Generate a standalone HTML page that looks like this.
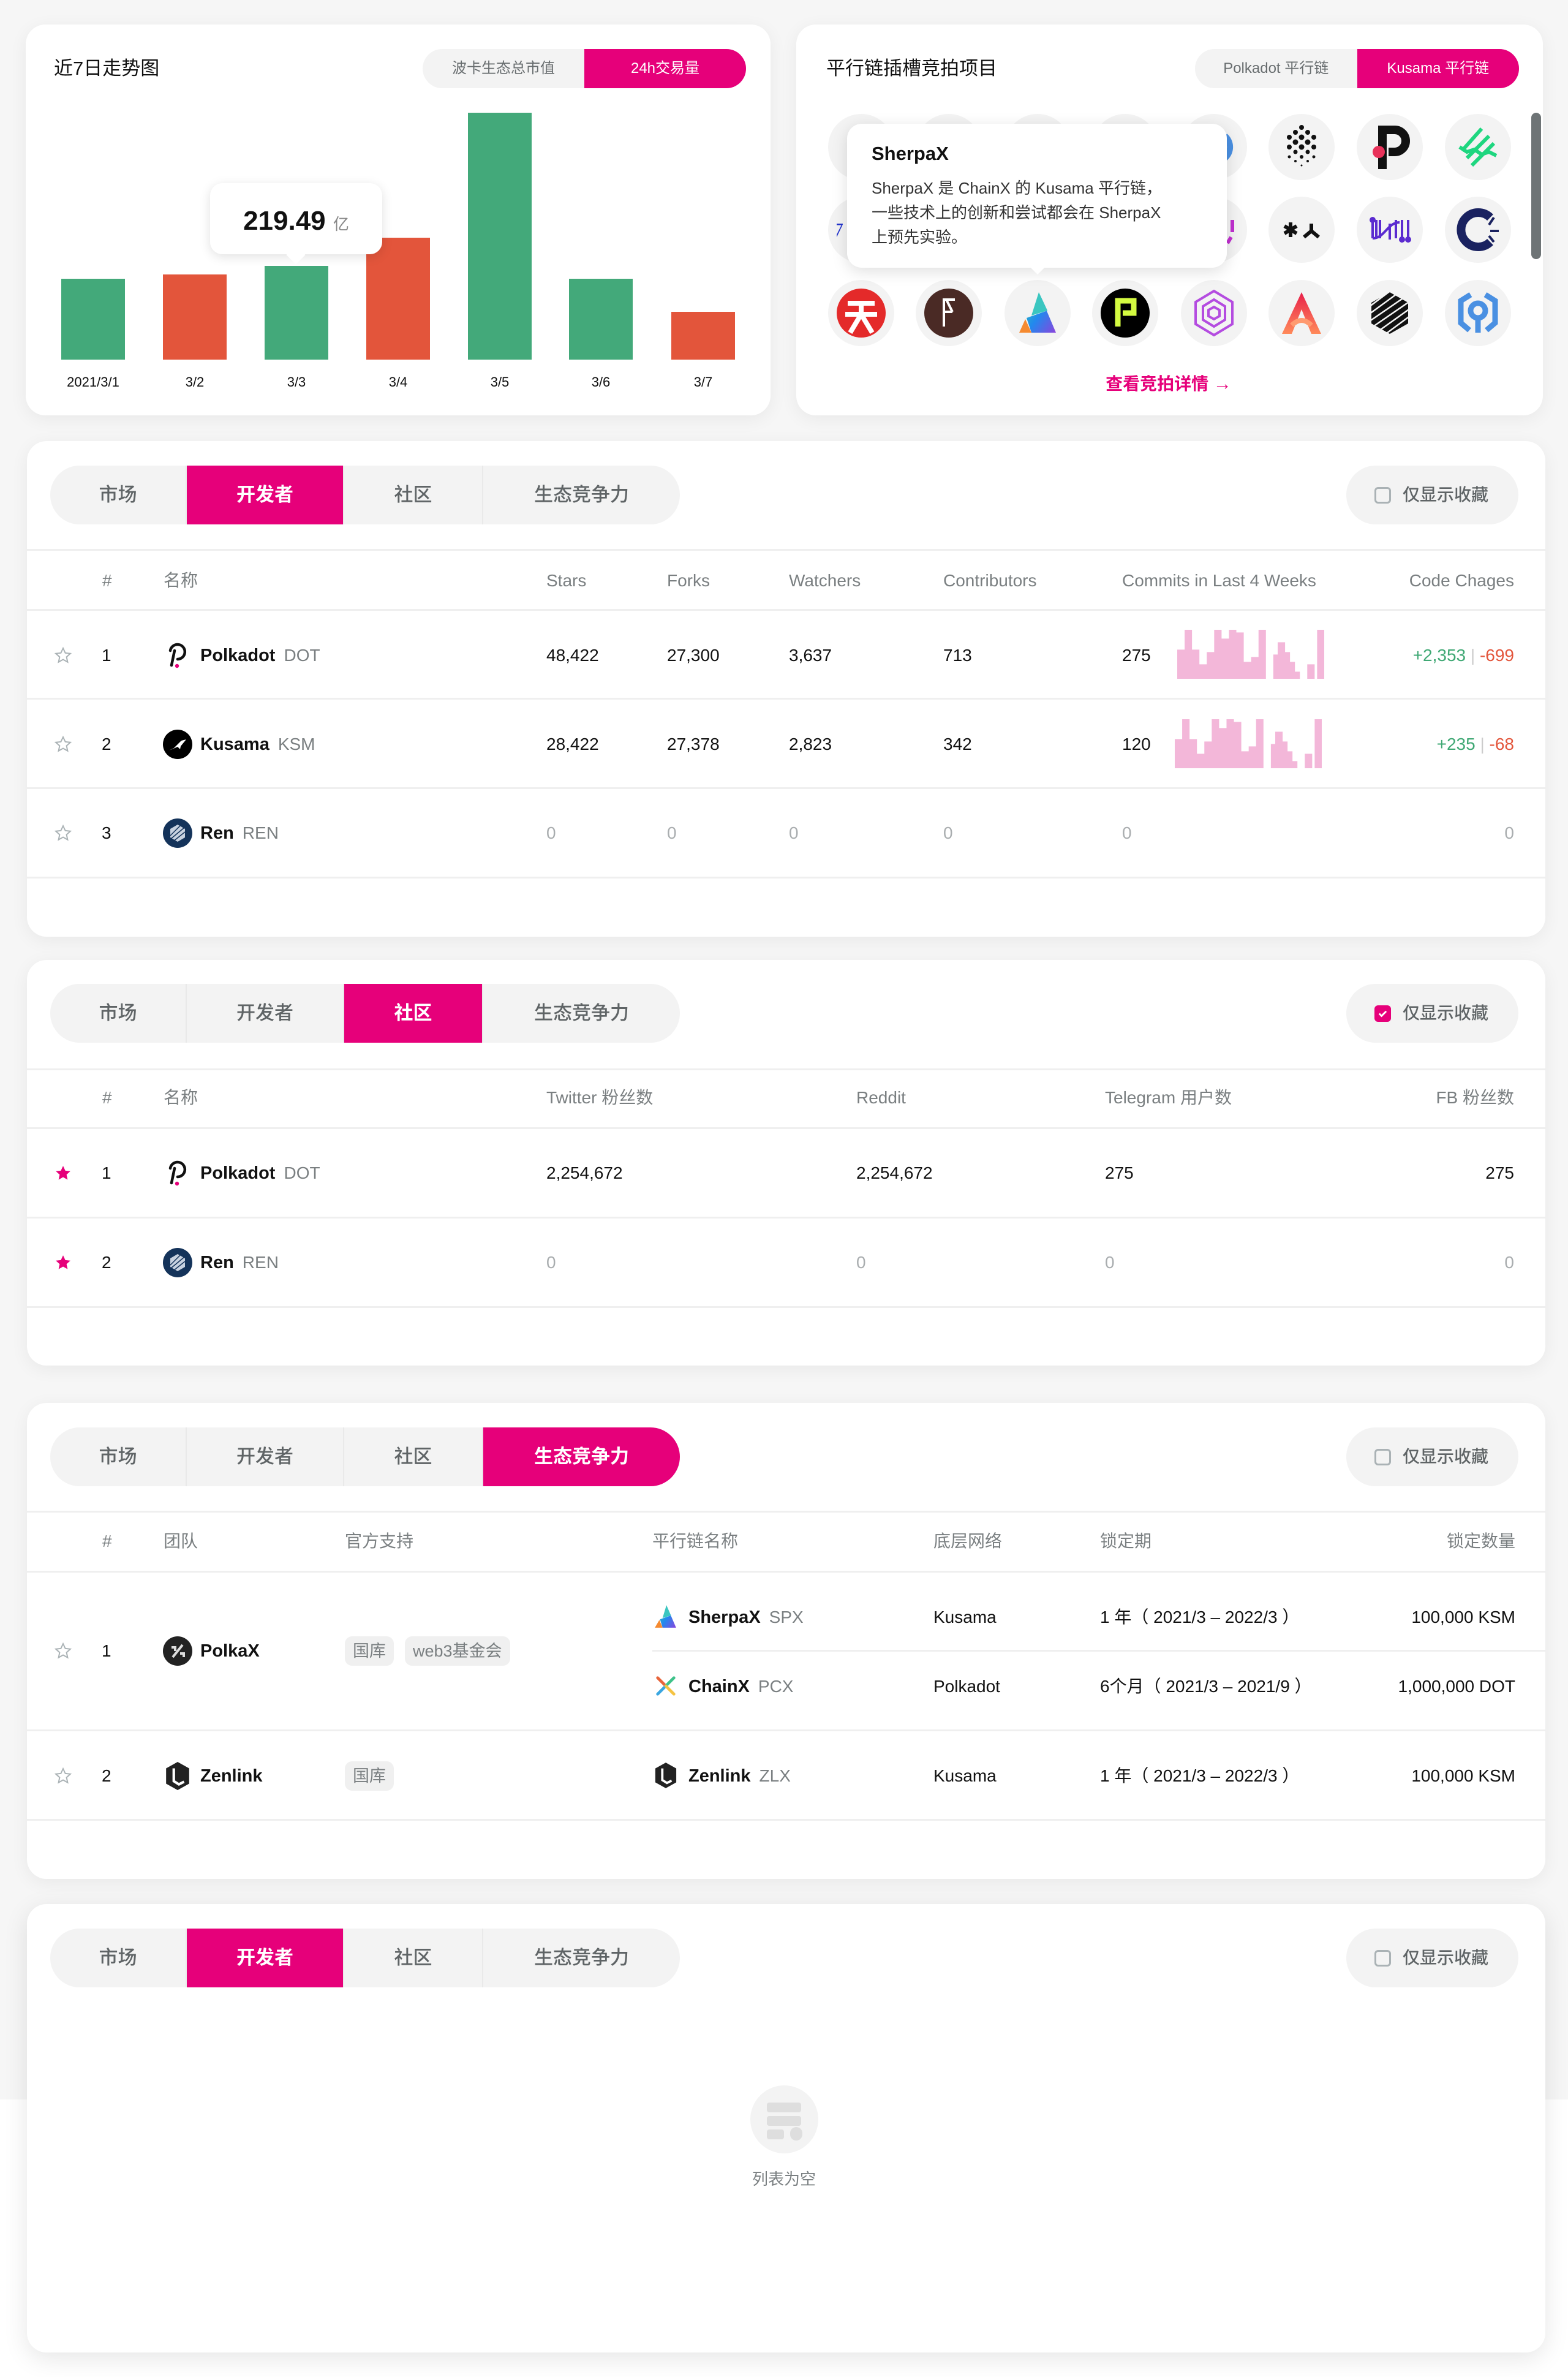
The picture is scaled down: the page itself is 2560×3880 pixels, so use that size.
<!DOCTYPE html>
<html><head><meta charset="utf-8">
<style>
*{margin:0;padding:0;box-sizing:border-box}
html,body{width:2560px;height:3880px;overflow:hidden}
body{position:relative;background:linear-gradient(#f6f6f6 0,#f6f6f6 3427px,#fff 3427px);font-family:"Liberation Sans","Noto Sans CJK SC",sans-serif;color:#111}
.a{position:absolute}
.card{position:absolute;background:#fff;border-radius:32px;box-shadow:0 6px 30px rgba(0,0,0,.06)}
.t{position:absolute;white-space:nowrap;height:40px;line-height:40px;font-size:28px}
.r{text-align:right}
.h{color:#7a7f81}
.g{color:#a9adaf}
.b{font-weight:bold;font-size:29px;color:#111}
.tk{color:#7a7f81;font-weight:normal;margin-left:14px;font-size:28px}
.line{position:absolute;height:3px;background:#efefef}
.tabs{position:absolute;left:82px;width:1028px;height:96px;border-radius:48px;background:#f3f3f3;overflow:hidden;display:flex}
.tabs div{height:96px;line-height:96px;text-align:center;font-size:31px;color:#5f6466;border-right:2px solid #e9e9e9;font-weight:500}
.tabs div:last-child{border-right:none}
.tabs .on{background:#e6007a;color:#fff;font-weight:bold}
.fav{position:absolute;left:2198px;width:281px;height:96px;border-radius:48px;background:#f3f3f3;font-size:28px;color:#5f6466;line-height:96px;padding-left:92px;font-weight:500}
.fav i{position:absolute;left:46px;top:35px;width:27px;height:27px;border:3px solid #aab2b5;border-radius:6px}
.fav i.ck{background:#e6007a;border-color:#e6007a}
.star{position:absolute;left:88px;width:30px;height:30px}
.ic{position:absolute;width:108px;height:108px;border-radius:54px;background:#f3f3f3}
.ic svg{position:absolute;left:14px;top:14px;width:80px;height:80px}
.tog{position:absolute;height:64px;border-radius:32px;background:#f3f3f3;overflow:hidden;display:flex;font-size:24px}
.tog div{flex:1;text-align:center;line-height:64px;color:#686d6f}
.tog .on{background:#e6007a;color:#fff}
.tag{position:absolute;height:48px;line-height:48px;border-radius:12px;background:#f0f0f0;color:#7a7f81;font-size:27px;padding:0 13px}
</style></head><body>

<!-- Card 1 -->
<div class="card" style="left:42px;top:40px;width:1216px;height:638px"></div>
<div class="t" style="left:88px;top:92px;font-size:31px">近7日走势图</div>
<div class="tog" style="left:690px;top:80px;width:528px"><div>波卡生态总市值</div><div class="on">24h交易量</div></div>
<div class="a" style="left:100px;top:455px;width:104px;height:132px;background:#43a97a"></div>
<div class="a" style="left:266px;top:448px;width:104px;height:139px;background:#e3553b"></div>
<div class="a" style="left:432px;top:434px;width:104px;height:153px;background:#43a97a"></div>
<div class="a" style="left:598px;top:388px;width:104px;height:199px;background:#e3553b"></div>
<div class="a" style="left:764px;top:184px;width:104px;height:403px;background:#43a97a"></div>
<div class="a" style="left:929px;top:455px;width:104px;height:132px;background:#43a97a"></div>
<div class="a" style="left:1096px;top:509px;width:104px;height:78px;background:#e3553b"></div>
<div class="t" style="left:100px;top:604px;width:104px;text-align:center;font-size:22px">2021/3/1</div>
<div class="t" style="left:266px;top:604px;width:104px;text-align:center;font-size:22px">3/2</div>
<div class="t" style="left:432px;top:604px;width:104px;text-align:center;font-size:22px">3/3</div>
<div class="t" style="left:598px;top:604px;width:104px;text-align:center;font-size:22px">3/4</div>
<div class="t" style="left:764px;top:604px;width:104px;text-align:center;font-size:22px">3/5</div>
<div class="t" style="left:929px;top:604px;width:104px;text-align:center;font-size:22px">3/6</div>
<div class="t" style="left:1096px;top:604px;width:104px;text-align:center;font-size:22px">3/7</div>
<div class="a" style="left:343px;top:299px;width:281px;height:116px;background:#fff;border-radius:20px;box-shadow:0 4px 18px rgba(0,0,0,.12)"></div>
<div class="a" style="left:472px;top:405px;width:22px;height:22px;background:#fff;transform:rotate(45deg)"></div>
<div class="t" style="left:343px;top:336px;width:281px;text-align:center;height:50px;line-height:50px;font-size:44px;font-weight:bold">219.49 <span style="font-size:26px;font-weight:normal;color:#888">亿</span></div>

<!-- Card 2 -->
<div class="card" style="left:1300px;top:40px;width:1219px;height:638px"></div>
<div class="t" style="left:1349px;top:92px;font-size:31px">平行链插槽竞拍项目</div>
<div class="tog" style="left:1951px;top:80px;width:529px"><div>Polkadot 平行链</div><div class="on">Kusama 平行链</div></div>
<div class="a" style="left:2500px;top:184px;width:16px;height:239px;border-radius:8px;background:#6e7476"></div>

<div class="ic" style="left:1352px;top:186px"></div>
<div class="ic" style="left:1495px;top:186px"></div>
<div class="ic" style="left:1640px;top:186px"></div>
<div class="ic" style="left:1783px;top:186px"></div>
<div class="ic" style="left:1928px;top:186px"><svg viewBox="0 0 80 80"><path d="M58 22a24 24 0 0 1 0 36" stroke="#4a90e2" stroke-width="10" fill="none"/></svg></div>
<div class="ic" style="left:2071px;top:186px"><svg viewBox="0 0 80 80" fill="#111"><circle cx="40" cy="8" r="4"/><circle cx="30" cy="16" r="4"/><circle cx="50" cy="16" r="4"/><circle cx="20" cy="24" r="4"/><circle cx="40" cy="24" r="4.5"/><circle cx="60" cy="24" r="4"/><circle cx="30" cy="32" r="4.5"/><circle cx="50" cy="32" r="4.5"/><circle cx="20" cy="40" r="4"/><circle cx="40" cy="40" r="4.5"/><circle cx="60" cy="40" r="4"/><circle cx="30" cy="48" r="3.5"/><circle cx="50" cy="48" r="3.5"/><circle cx="20" cy="56" r="2.5"/><circle cx="40" cy="56" r="3"/><circle cx="60" cy="56" r="2.5"/><circle cx="30" cy="63" r="2"/><circle cx="50" cy="63" r="2"/><circle cx="40" cy="70" r="1.5"/></svg></div>
<div class="ic" style="left:2215px;top:186px"><svg viewBox="0 0 80 80"><path d="M28 76V12h20a18 18 0 0 1 0 36H38" stroke="#111" stroke-width="14" fill="none"/><circle cx="22" cy="48" r="10" fill="#e8325a"/></svg></div>
<div class="ic" style="left:2359px;top:186px"><svg viewBox="0 0 80 80" stroke="#1ed67f" stroke-width="6" fill="none"><path d="M14 46L46 10M22 58L58 22M30 70L66 34M10 40l12 8 12-4 12 8 12-4 12 6"/></svg></div>
<div class="ic" style="left:1352px;top:321px"><svg viewBox="0 0 80 80"><text x="-6" y="52" font-size="34" fill="#2233cc" font-family="Liberation Serif">7</text></svg></div>
<div class="ic" style="left:1495px;top:321px"></div>
<div class="ic" style="left:1640px;top:321px"></div>
<div class="ic" style="left:1783px;top:321px"></div>
<div class="ic" style="left:1928px;top:321px"><svg viewBox="0 0 80 80"><path d="M70 24v20M68 52l-6 10" stroke="#c030d0" stroke-width="6" fill="none"/></svg></div>
<div class="ic" style="left:2071px;top:321px"><svg viewBox="0 0 80 80" stroke="#111" stroke-width="6" fill="none"><path d="M22 28v24M12 34l20 12M12 46l20-12M56 30v12l-12 10M56 42l12 10"/></svg></div>
<div class="ic" style="left:2215px;top:321px"><svg viewBox="0 0 80 80" stroke="#5b2bd0" stroke-width="4" fill="none"><path d="M12 24v30M18 24v30M24 24v30M12 54c20 0 24-26 44-26M40 30v26M50 24v30M60 24v30M70 24v30"/><circle cx="12" cy="24" r="3" fill="#5b2bd0"/><circle cx="60" cy="56" r="3" fill="#5b2bd0"/><circle cx="70" cy="56" r="3" fill="#5b2bd0"/></svg></div>
<div class="ic" style="left:2359px;top:321px"><svg viewBox="0 0 80 80"><path d="M60 20A28 28 0 1 0 60 60" stroke="#1a2260" stroke-width="14" fill="none"/><path d="M58 32l8-12M60 42h14M58 50l8 10" stroke="#1a2260" stroke-width="4"/></svg></div>
<div class="ic" style="left:1352px;top:457px"><svg viewBox="0 0 80 80"><circle cx="40" cy="40" r="40" fill="#e42a2a"/><path d="M18 24h44M14 42h52M40 24v18L22 72M40 42l18 30" stroke="#fff" stroke-width="8" fill="none"/></svg></div>
<div class="ic" style="left:1495px;top:457px"><svg viewBox="0 0 80 80"><circle cx="40" cy="40" r="40" fill="#4a2a25"/><path d="M32 62V18h18M32 38h14M36 18l10 20" stroke="#fff" stroke-width="4" fill="none"/></svg></div>
<div class="ic" style="left:1640px;top:457px"><svg viewBox="0 0 80 80"><defs><linearGradient id="sg" x1="0" y1="0" x2="1" y2="1"><stop offset="0" stop-color="#2bd0a8"/><stop offset=".5" stop-color="#2288ee"/><stop offset="1" stop-color="#8b44dd"/></linearGradient></defs><path d="M42 6L70 72H30L22 48L56 36z" fill="url(#sg)"/><path d="M42 6L56 36L30 44z" fill="#3ac6c0"/><path d="M20 50L30 72H10z" fill="#f58a30"/></svg></div>
<div class="ic" style="left:1783px;top:457px"><svg viewBox="0 0 80 80"><circle cx="40" cy="40" r="40" fill="#000"/><path d="M28 62V20h26v20H36" stroke="#d4fa41" stroke-width="9" fill="none"/></svg></div>
<div class="ic" style="left:1928px;top:457px"><svg viewBox="0 0 80 80" fill="none" stroke="#b44ce0" stroke-width="4"><path d="M40 4l30 18v36L40 76 10 58V22z"/><path d="M40 18l18 11v22L40 62 22 51V29z"/><path d="M40 30l9 5v10l-9 5-9-5V35z"/></svg></div>
<div class="ic" style="left:2071px;top:457px"><svg viewBox="0 0 80 80"><defs><linearGradient id="ag" x1="0" y1="0" x2="0" y2="1"><stop offset="0" stop-color="#e8204a"/><stop offset="1" stop-color="#ff8a5a"/></linearGradient></defs><path d="M40 6L8 74h16l16-40 16 40h16z" fill="url(#ag)"/><path d="M24 60q16-16 32 0" stroke="#ff9a70" stroke-width="8" fill="none"/></svg></div>
<div class="ic" style="left:2215px;top:457px"><svg viewBox="0 0 80 80"><path d="M40 6l30 17v34L40 74 10 57V23z" fill="#111"/><path d="M6 30L46 0M6 42L58 4M6 54L70 10M10 64L74 20M18 72L74 32M28 78L74 44M40 80L74 56" stroke="#f3f3f3" stroke-width="2.5"/></svg></div>
<div class="ic" style="left:2359px;top:457px"><svg viewBox="0 0 80 80" fill="none" stroke="#4a90e2" stroke-width="9"><path d="M28 10L12 20v36l14 12M52 10l16 10v36L54 68"/><circle cx="40" cy="36" r="12"/><path d="M40 48v24"/></svg></div>
<div class="a" style="left:1383px;top:202px;width:620px;height:235px;background:#fff;border-radius:24px;box-shadow:0 6px 26px rgba(0,0,0,.13)"></div>
<div class="a" style="left:1684px;top:424px;width:20px;height:20px;background:#fff;transform:rotate(45deg)"></div>
<div class="t" style="left:1423px;top:231px;font-size:31px;font-weight:bold">SherpaX</div>
<div class="t" style="left:1423px;top:287px;font-size:26px;color:#333">SherpaX 是 ChainX 的 Kusama 平行链，</div>
<div class="t" style="left:1423px;top:327px;font-size:26px;color:#333">一些技术上的创新和尝试都会在 SherpaX</div>
<div class="t" style="left:1423px;top:367px;font-size:26px;color:#333">上预先实验。</div>
<div class="t" style="left:1800px;top:607px;width:216px;text-align:center;font-size:28px;font-weight:bold;color:#e6007a">查看竞拍详情 <span style="font-size:30px">→</span></div>

<!-- Card 3 -->
<div class="card" style="left:44px;top:720px;width:2479px;height:809px"></div>
<div class="tabs" style="top:760px"><div style="width:223px">市场</div><div class="on" style="width:257px">开发者</div><div style="width:227px">社区</div><div style="width:321px">生态竞争力</div></div>
<div class="fav" style="top:760px"><i></i>仅显示收藏</div>
<div class="line" style="left:44px;width:2479px;top:896px"></div>
<div class="t h" style="left:167px;top:928px">#</div>
<div class="t h" style="left:267px;top:928px">名称</div>
<div class="t h" style="left:892px;top:928px">Stars</div>
<div class="t h" style="left:1089px;top:928px">Forks</div>
<div class="t h" style="left:1288px;top:928px">Watchers</div>
<div class="t h" style="left:1540px;top:928px">Contributors</div>
<div class="t h" style="left:1832px;top:928px">Commits in Last 4 Weeks</div>
<div class="t h r" style="right:88px;top:928px">Code Chages</div>
<div class="line" style="left:44px;width:2479px;top:994px"></div>

<svg class="star" style="top:1055px" viewBox="0 0 24 24"><path d="M12 2.5l2.9 6.2 6.6.7-5 4.5 1.4 6.6L12 17.2l-5.9 3.3 1.4-6.6-5-4.5 6.6-.7z" fill="none" stroke="#aab2b5" stroke-width="1.6"/></svg>
<div class="t" style="left:166px;top:1050px">1</div>
<svg class="a" style="left:272px;top:1046px;width:36px;height:46px" viewBox="0 0 36 46"><path d="M8 40L13 16M6 16a12 12 0 1 1 12 14" stroke="#111" stroke-width="4.5" fill="none" stroke-linecap="round"/><circle cx="17" cy="41" r="3.2" fill="#e6007a"/></svg>
<div class="t b" style="left:327px;top:1050px">Polkadot<span class="tk">DOT</span></div>
<div class="t" style="left:892px;top:1050px">48,422</div>
<div class="t" style="left:1089px;top:1050px">27,300</div>
<div class="t" style="left:1288px;top:1050px">3,637</div>
<div class="t" style="left:1540px;top:1050px">713</div>
<div class="t" style="left:1832px;top:1050px">275</div>
<svg class="a" style="left:1922px;top:1028px;width:240px;height:80px" viewBox="273 53 537 240" preserveAspectRatio="none"><path fill="#f3b7d9" d="M273 293V150H300V53H327V150H354V222H381V162H408V53H435V96H462V53H489V66H516V210H543V186H570V53H597V293zM624 293V174H640V114H667V162H685V210H703V258H721V293zM748 293V222H775V293zM784 293V53H810V293z"/></svg>
<div class="t r" style="right:88px;top:1050px"><span style="color:#3fa874">+2,353</span> <span style="color:#ccc">|</span> <span style="color:#e3553b">-699</span></div>
<div class="line" style="left:44px;width:2479px;top:1139px"></div>

<svg class="star" style="top:1200px" viewBox="0 0 24 24"><path d="M12 2.5l2.9 6.2 6.6.7-5 4.5 1.4 6.6L12 17.2l-5.9 3.3 1.4-6.6-5-4.5 6.6-.7z" fill="none" stroke="#aab2b5" stroke-width="1.6"/></svg>
<div class="t" style="left:166px;top:1195px">2</div>
<svg class="a" style="left:266px;top:1191px;width:48px;height:48px" viewBox="0 0 48 48"><circle cx="24" cy="24" r="24" fill="#000"/><path d="M10 34l14-6 4 4 1-5 9-11-8 2-12 12z" fill="#fff"/></svg>
<div class="t b" style="left:327px;top:1195px">Kusama<span class="tk">KSM</span></div>
<div class="t" style="left:892px;top:1195px">28,422</div>
<div class="t" style="left:1089px;top:1195px">27,378</div>
<div class="t" style="left:1288px;top:1195px">2,823</div>
<div class="t" style="left:1540px;top:1195px">342</div>
<div class="t" style="left:1832px;top:1195px">120</div>
<svg class="a" style="left:1918px;top:1174px;width:240px;height:80px" viewBox="273 53 537 240" preserveAspectRatio="none"><path fill="#f3b7d9" d="M273 293V150H300V53H327V150H354V222H381V162H408V53H435V96H462V53H489V66H516V210H543V186H570V53H597V293zM624 293V174H640V114H667V162H685V210H703V258H721V293zM748 293V222H775V293zM784 293V53H810V293z"/></svg>
<div class="t r" style="right:88px;top:1195px"><span style="color:#3fa874">+235</span> <span style="color:#ccc">|</span> <span style="color:#e3553b">-68</span></div>
<div class="line" style="left:44px;width:2479px;top:1285px"></div>

<svg class="star" style="top:1345px" viewBox="0 0 24 24"><path d="M12 2.5l2.9 6.2 6.6.7-5 4.5 1.4 6.6L12 17.2l-5.9 3.3 1.4-6.6-5-4.5 6.6-.7z" fill="none" stroke="#aab2b5" stroke-width="1.6"/></svg>
<div class="t" style="left:166px;top:1340px">3</div>
<svg class="a" style="left:266px;top:1336px;width:48px;height:48px" viewBox="0 0 48 48"><circle cx="24" cy="24" r="24" fill="#14335a"/><path d="M24 10l12 7v14l-12 7-12-7V17z" fill="#c8d2e0"/><path d="M12 28L30 10M12 34L36 14M16 38L36 22" stroke="#14335a" stroke-width="1.5"/></svg>
<div class="t b" style="left:327px;top:1340px">Ren<span class="tk">REN</span></div>
<div class="t g" style="left:892px;top:1340px">0</div>
<div class="t g" style="left:1089px;top:1340px">0</div>
<div class="t g" style="left:1288px;top:1340px">0</div>
<div class="t g" style="left:1540px;top:1340px">0</div>
<div class="t g" style="left:1832px;top:1340px">0</div>
<div class="t g r" style="right:88px;top:1340px">0</div>
<div class="line" style="left:44px;width:2479px;top:1431px"></div>

<!-- Card 4 -->
<div class="card" style="left:44px;top:1567px;width:2479px;height:662px"></div>
<div class="tabs" style="top:1606px"><div style="width:223px">市场</div><div style="width:257px">开发者</div><div class="on" style="width:227px">社区</div><div style="width:321px">生态竞争力</div></div>
<div class="fav" style="top:1606px"><i class="ck"><svg style="position:absolute;left:1px;top:1px" width="19" height="19" viewBox="0 0 20 20"><path d="M4 10l4 4 8-8" stroke="#fff" stroke-width="3" fill="none"/></svg></i>仅显示收藏</div>
<div class="line" style="left:44px;width:2479px;top:1744px"></div>
<div class="t h" style="left:167px;top:1772px">#</div>
<div class="t h" style="left:267px;top:1772px">名称</div>
<div class="t h" style="left:892px;top:1772px">Twitter 粉丝数</div>
<div class="t h" style="left:1398px;top:1772px">Reddit</div>
<div class="t h" style="left:1804px;top:1772px">Telegram 用户数</div>
<div class="t h r" style="right:88px;top:1772px">FB 粉丝数</div>
<div class="line" style="left:44px;width:2479px;top:1840px"></div>
<svg class="star" style="top:1900px" viewBox="0 0 24 24"><path d="M12 2.5l2.9 6.2 6.6.7-5 4.5 1.4 6.6L12 17.2l-5.9 3.3 1.4-6.6-5-4.5 6.6-.7z" fill="#e6007a"/></svg>
<div class="t" style="left:166px;top:1895px">1</div>
<svg class="a" style="left:272px;top:1891px;width:36px;height:46px" viewBox="0 0 36 46"><path d="M8 40L13 16M6 16a12 12 0 1 1 12 14" stroke="#111" stroke-width="4.5" fill="none" stroke-linecap="round"/><circle cx="17" cy="41" r="3.2" fill="#e6007a"/></svg>
<div class="t b" style="left:327px;top:1895px">Polkadot<span class="tk">DOT</span></div>
<div class="t" style="left:892px;top:1895px">2,254,672</div>
<div class="t" style="left:1398px;top:1895px">2,254,672</div>
<div class="t" style="left:1804px;top:1895px">275</div>
<div class="t r" style="right:88px;top:1895px">275</div>
<div class="line" style="left:44px;width:2479px;top:1986px"></div>
<svg class="star" style="top:2046px" viewBox="0 0 24 24"><path d="M12 2.5l2.9 6.2 6.6.7-5 4.5 1.4 6.6L12 17.2l-5.9 3.3 1.4-6.6-5-4.5 6.6-.7z" fill="#e6007a"/></svg>
<div class="t" style="left:166px;top:2041px">2</div>
<svg class="a" style="left:266px;top:2037px;width:48px;height:48px" viewBox="0 0 48 48"><circle cx="24" cy="24" r="24" fill="#14335a"/><path d="M24 10l12 7v14l-12 7-12-7V17z" fill="#c8d2e0"/><path d="M12 28L30 10M12 34L36 14M16 38L36 22" stroke="#14335a" stroke-width="1.5"/></svg>
<div class="t b" style="left:327px;top:2041px">Ren<span class="tk">REN</span></div>
<div class="t g" style="left:892px;top:2041px">0</div>
<div class="t g" style="left:1398px;top:2041px">0</div>
<div class="t g" style="left:1804px;top:2041px">0</div>
<div class="t g r" style="right:88px;top:2041px">0</div>
<div class="line" style="left:44px;width:2479px;top:2132px"></div>

<!-- Card 5 -->
<div class="card" style="left:44px;top:2290px;width:2479px;height:777px"></div>
<div class="tabs" style="top:2330px"><div style="width:223px">市场</div><div style="width:257px">开发者</div><div style="width:227px">社区</div><div class="on" style="width:321px">生态竞争力</div></div>
<div class="fav" style="top:2330px"><i></i>仅显示收藏</div>
<div class="line" style="left:44px;width:2479px;top:2466px"></div>
<div class="t h" style="left:167px;top:2496px">#</div>
<div class="t h" style="left:267px;top:2496px">团队</div>
<div class="t h" style="left:563px;top:2496px">官方支持</div>
<div class="t h" style="left:1065px;top:2496px">平行链名称</div>
<div class="t h" style="left:1524px;top:2496px">底层网络</div>
<div class="t h" style="left:1796px;top:2496px">锁定期</div>
<div class="t h r" style="right:86px;top:2496px">锁定数量</div>
<div class="line" style="left:44px;width:2479px;top:2564px"></div>
<svg class="star" style="top:2680px" viewBox="0 0 24 24"><path d="M12 2.5l2.9 6.2 6.6.7-5 4.5 1.4 6.6L12 17.2l-5.9 3.3 1.4-6.6-5-4.5 6.6-.7z" fill="none" stroke="#aab2b5" stroke-width="1.6"/></svg>
<div class="t" style="left:166px;top:2675px">1</div>
<svg class="a" style="left:266px;top:2671px;width:48px;height:48px" viewBox="0 0 48 48"><circle cx="24" cy="24" r="24" fill="#222"/><path d="M16 34L32 14M14 18h6v6M28 28h6v6" stroke="#ddd" stroke-width="4" fill="none"/></svg>
<div class="t b" style="left:327px;top:2675px">PolkaX</div>
<div class="tag" style="left:563px;top:2671px">国库</div>
<div class="tag" style="left:661px;top:2671px">web3基金会</div>
<svg class="a" style="left:1066px;top:2620px;width:42px;height:38px" viewBox="0 0 80 72"><defs><linearGradient id="sg2" x1="0" y1="0" x2="1" y2="1"><stop offset="0" stop-color="#2bd0a8"/><stop offset=".5" stop-color="#2288ee"/><stop offset="1" stop-color="#8b44dd"/></linearGradient></defs><path d="M42 0L72 70H30L22 44L56 32z" fill="url(#sg2)"/><path d="M42 0L56 32L30 40z" fill="#3ac6c0"/><path d="M20 46L30 70H6z" fill="#f58a30"/></svg>
<div class="t b" style="left:1124px;top:2620px">SherpaX<span class="tk">SPX</span></div>
<div class="t" style="left:1524px;top:2620px">Kusama</div>
<div class="t" style="left:1796px;top:2620px">1 年（ 2021/3 – 2022/3 ）</div>
<div class="t r" style="right:86px;top:2620px">100,000 KSM</div>
<div class="line" style="left:1065px;width:1458px;top:2693px"></div>
<svg class="a" style="left:1068px;top:2733px;width:38px;height:38px" viewBox="0 0 40 40" fill="none" stroke-width="5" stroke-linecap="round"><path d="M6 6l14 14" stroke="#e8643a"/><path d="M34 6L20 20" stroke="#3ec28a"/><path d="M6 34l14-14" stroke="#3aa6e0"/><path d="M34 34L20 20" stroke="#f5c342"/></svg>
<div class="t b" style="left:1124px;top:2733px">ChainX<span class="tk">PCX</span></div>
<div class="t" style="left:1524px;top:2733px">Polkadot</div>
<div class="t" style="left:1796px;top:2733px">6个月（ 2021/3 – 2021/9 ）</div>
<div class="t r" style="right:86px;top:2733px">1,000,000 DOT</div>
<div class="line" style="left:44px;width:2479px;top:2823px"></div>
<svg class="star" style="top:2884px" viewBox="0 0 24 24"><path d="M12 2.5l2.9 6.2 6.6.7-5 4.5 1.4 6.6L12 17.2l-5.9 3.3 1.4-6.6-5-4.5 6.6-.7z" fill="none" stroke="#aab2b5" stroke-width="1.6"/></svg>
<div class="t" style="left:166px;top:2879px">2</div>
<svg class="a" style="left:268px;top:2876px;width:44px;height:46px" viewBox="0 0 40 44"><path d="M20 0l18 10v24L20 44 2 34V10z" fill="#222"/><path d="M14 10v20l8 5 8-4" stroke="#fff" stroke-width="4" fill="none"/></svg>
<div class="t b" style="left:327px;top:2879px">Zenlink</div>
<div class="tag" style="left:563px;top:2875px">国库</div>
<svg class="a" style="left:1068px;top:2877px;width:38px;height:42px" viewBox="0 0 40 44"><path d="M20 0l18 10v24L20 44 2 34V10z" fill="#222"/><path d="M14 10v20l8 5 8-4" stroke="#fff" stroke-width="4" fill="none"/></svg>
<div class="t b" style="left:1124px;top:2879px">Zenlink<span class="tk">ZLX</span></div>
<div class="t" style="left:1524px;top:2879px">Kusama</div>
<div class="t" style="left:1796px;top:2879px">1 年（ 2021/3 – 2022/3 ）</div>
<div class="t r" style="right:86px;top:2879px">100,000 KSM</div>
<div class="line" style="left:44px;width:2479px;top:2969px"></div>

<!-- Card 6 -->
<div class="card" style="left:44px;top:3108px;width:2479px;height:732px;box-shadow:0 10px 40px rgba(0,0,0,.10)"></div>
<div class="tabs" style="top:3148px"><div style="width:223px">市场</div><div class="on" style="width:257px">开发者</div><div style="width:227px">社区</div><div style="width:321px">生态竞争力</div></div>
<div class="fav" style="top:3148px"><i></i>仅显示收藏</div>
<div class="a" style="left:1225px;top:3404px;width:111px;height:111px;border-radius:56px;background:#f3f3f3"></div>
<div class="a" style="left:1252px;top:3432px;width:56px;height:16px;border-radius:4px;background:#dedede"></div>
<div class="a" style="left:1252px;top:3454px;width:56px;height:16px;border-radius:4px;background:#dedede"></div>
<div class="a" style="left:1252px;top:3476px;width:28px;height:16px;border-radius:4px;background:#dedede"></div>
<div class="a" style="left:1290px;top:3472px;width:20px;height:22px;border-radius:10px;background:#dedede"></div>
<div class="t" style="left:1180px;top:3537px;width:200px;text-align:center;color:#7a7f81;font-size:26px">列表为空</div>
</body></html>
